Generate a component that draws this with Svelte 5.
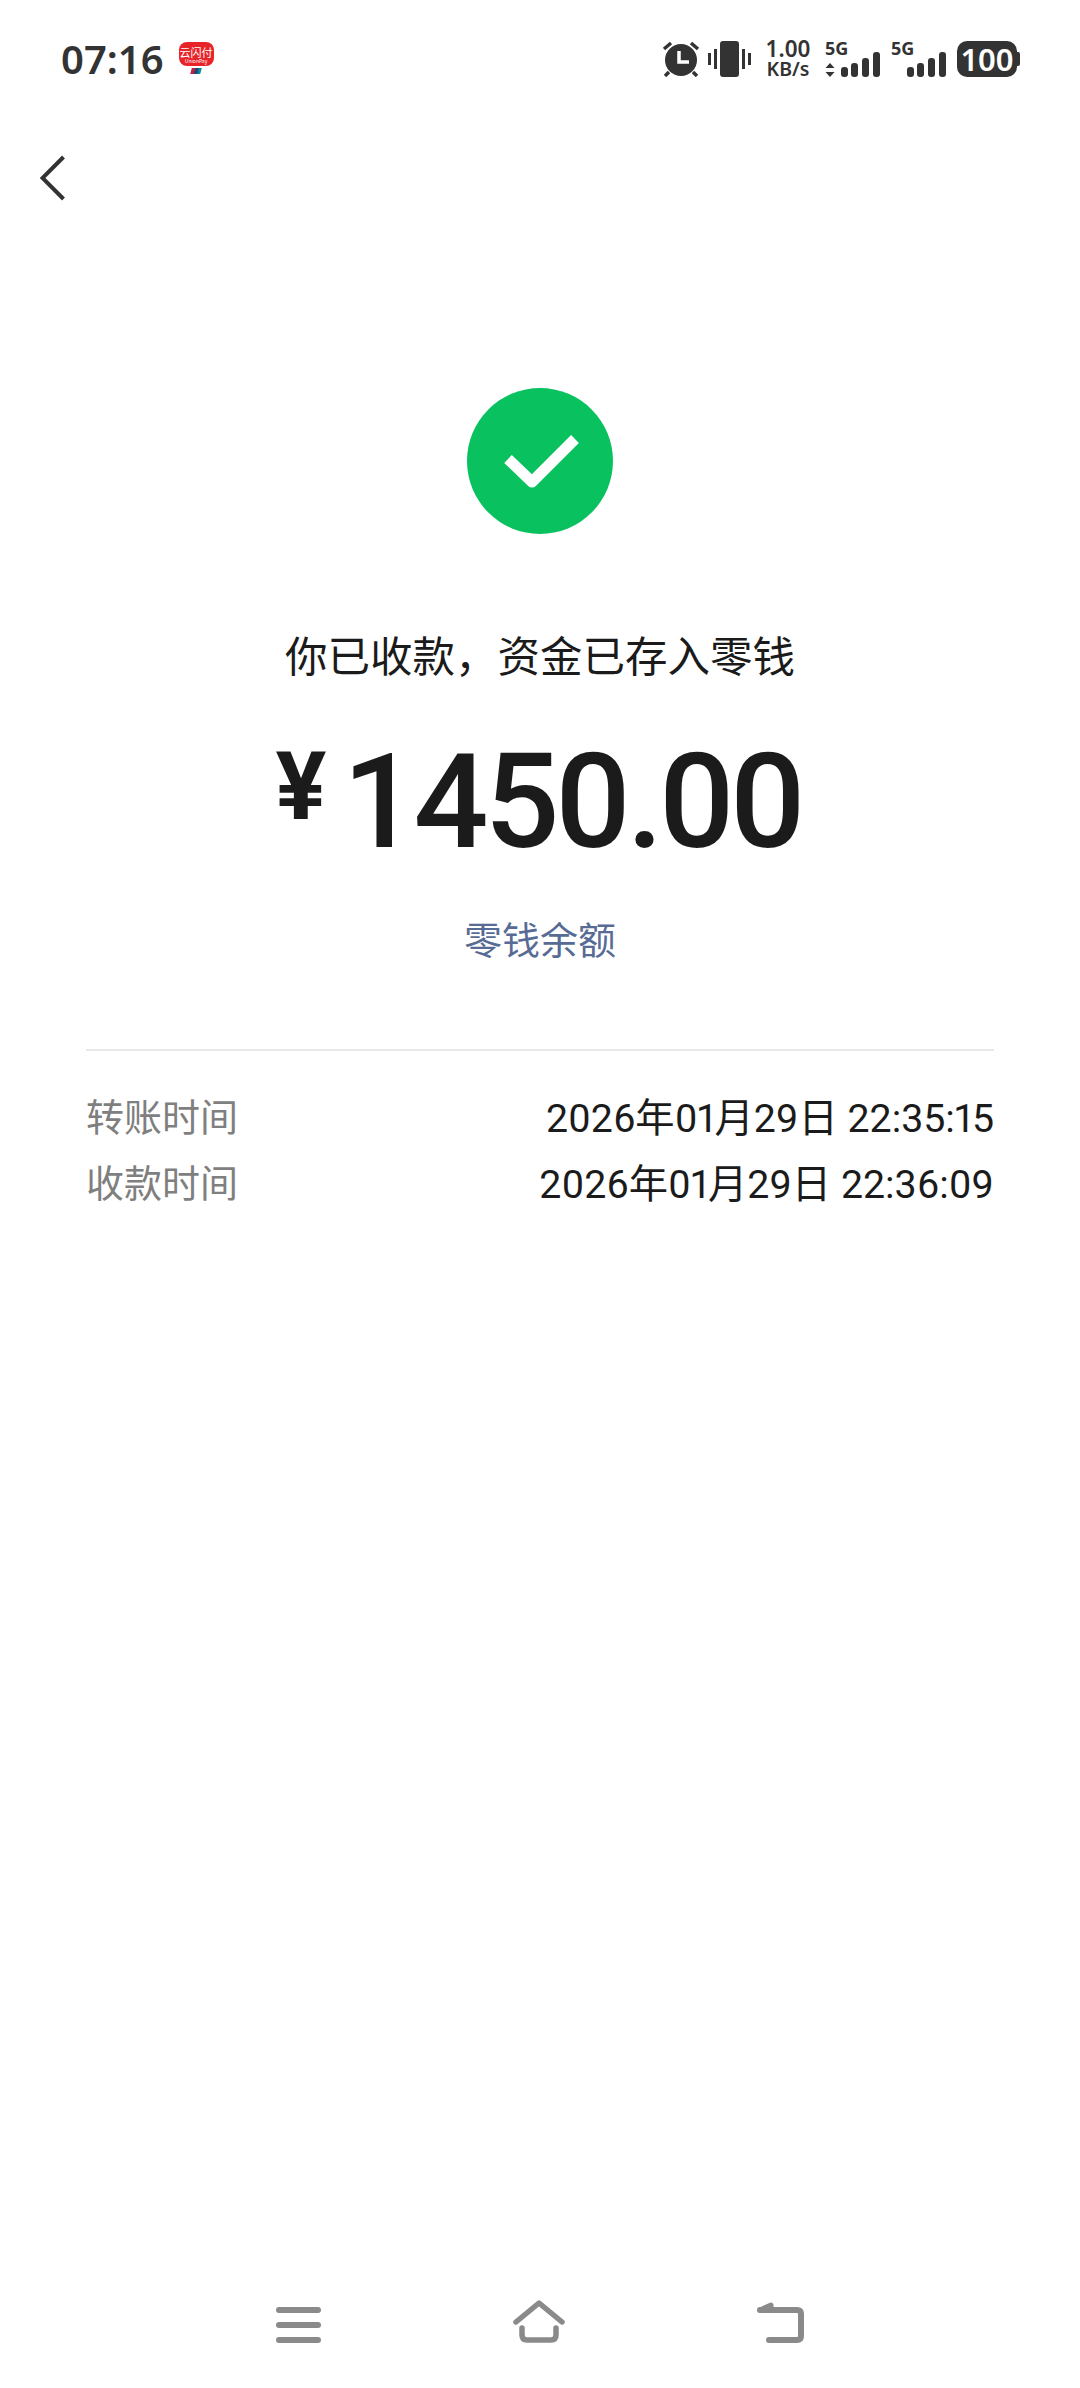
<script>
  // Transfer received page, phone status bar and nav bar included.
  const rows = [
    { label: "转账时间", value: "2026年01月29日 22:35:15" },
    { label: "收款时间", value: "2026年01月29日 22:36:09" },
  ];
  const signals = [{ arrows: true }, { arrows: false }];
  const bars = [
    { x: 16, y: 26, h: 10 },
    { x: 26, y: 22, h: 14 },
    { x: 37, y: 17, h: 19 },
    { x: 48, y: 11, h: 25 },
  ];
</script>

<div class="page">
  <header class="status">
    <div class="left">
      <span class="time">07:16</span>
      <div class="appicon">
        <div class="appicon_red">
          <span class="yun">云闪付</span>
          <span class="pay">UnionPay</span>
        </div>
        <div class="appicon_white"><i></i></div>
      </div>
    </div>
    <div class="right">
      <svg class="alarm" width="38" height="36" viewBox="0 0 38 36">
        <circle cx="19" cy="19" r="16" fill="#333" />
        <path d="M17 10v11h10" fill="none" stroke="#fff" stroke-width="3.500" />
        <path d="M2 8l7-6M36 8l-7-6M7 31l-4 4M31 31l4 4" stroke="#333" stroke-width="3.500" />
      </svg>
      <svg class="vibrate" width="43" height="36" viewBox="0 0 43 36">
        <rect x="12" y="0" width="19" height="36" rx="3" fill="#333" />
        <rect x="0" y="12" width="3" height="12" fill="#333" />
        <rect x="6" y="8" width="3" height="20" fill="#333" />
        <rect x="34" y="8" width="3" height="20" fill="#333" />
        <rect x="40" y="12" width="3" height="12" fill="#333" />
      </svg>
      <div class="speed">
        <span class="speed_num">1.00</span>
        <span class="speed_unit">KB/s</span>
      </div>
      {#each signals as s}
        <div class="signal">
          <span class="g5">5G</span>
          <svg width="56" height="36" viewBox="0 0 56 36">
            {#if s.arrows}
              <path d="M5 22l4.500 5h-9zM5 36l4.500-5h-9z" fill="#333" />
            {/if}
            {#each bars as b}
              <rect x={b.x} y={b.y} width="7" height={b.h} rx="3" fill="#333" />
            {/each}
          </svg>
        </div>
      {/each}
      <div class="battery"><span>100</span><i></i></div>
    </div>
  </header>

  <nav class="topbar">
    <svg width="26" height="46" viewBox="0 0 26 46">
      <path d="M23.500 2L2.500 23l21 21" fill="none" stroke="#333" stroke-width="4" />
    </svg>
  </nav>

  <main class="content">
    <svg class="okicon" width="146" height="146" viewBox="0 0 146 146">
      <circle cx="73" cy="73" r="73" fill="#0ac160" />
      <path d="M41 71l24 23 43-43" fill="none" stroke="#fff" stroke-width="11" stroke-linejoin="round" />
    </svg>
    <h1 class="title">你已收款&#65292;资金已存入零钱</h1>
    <div class="amount">
      <span class="yen">¥</span>
      <span class="num">1450.00</span>
    </div>
    <div class="balance">零钱余额</div>
    <div class="details">
      {#each rows as row}
        <div class="row">
          <span class="label">{row.label}</span>
          <span class="value">{row.value}</span>
        </div>
      {/each}
    </div>
  </main>

  <footer class="navbar">
    <svg width="45" height="50" viewBox="0 0 45 50">
      <path d="M3 12h39M3 27h39M3 42h39" fill="none" stroke="#8a8a8a" stroke-width="6" stroke-linecap="round" />
    </svg>
    <svg width="52" height="50" viewBox="0 0 52 50">
      <path d="M3 24L26 5l23 19" fill="none" stroke="#8a8a8a" stroke-width="5.500" stroke-linecap="round" stroke-linejoin="round" />
      <path d="M9 30v7q0 5 5 5h24q5 0 5-5v-7" fill="none" stroke="#8a8a8a" stroke-width="5.500" stroke-linecap="round" />
    </svg>
    <svg width="47" height="50" viewBox="0 0 47 50">
      <path d="M12 42h28q4 0 4-4V16q0-4-4-4H3" fill="none" stroke="#8a8a8a" stroke-width="6" stroke-linecap="round" stroke-linejoin="round" />
      <path d="M3 12L14 7v5z" fill="#8a8a8a" stroke="#8a8a8a" stroke-width="5" stroke-linejoin="round" />
    </svg>
  </footer>
</div>

<style>
  :global(body) {
    margin: 0;
    background: #fff;
  }
  .page {
    display: flex;
    flex-direction: column;
    width: 1080px;
    height: 2388px;
    overflow: hidden;
    background: #fff;
    font-family: Roboto, "Noto Sans CJK SC", sans-serif;
    color: #1b1b1b;
  }

  .status {
    display: flex;
    justify-content: space-between;
    align-items: center;
    height: 36px;
    padding: 41px 63px 0 61px;
  }
  .left,
  .right {
    display: flex;
    align-items: center;
  }
  .time {
    font-family: "Noto Sans", sans-serif;
    font-size: 40px;
    font-weight: 600;
    line-height: 36px;
    color: #333;
  }
  .appicon {
    display: flex;
    flex-direction: column;
    width: 35px;
    height: 35px;
    margin-left: 15px;
    border-radius: 8px;
    overflow: hidden;
    background: #fff;
  }
  .appicon_red {
    display: flex;
    flex-direction: column;
    align-items: center;
    height: 24px;
    background: #e8242a;
    color: #fff;
    border-radius: 0 0 8px 8px;
    font-family: "Noto Sans CJK SC", sans-serif;
  }
  .yun {
    font-size: 11px;
    line-height: 12px;
    margin-top: 4px;
  }
  .pay {
    font-size: 5px;
    line-height: 6px;
  }
  .appicon_white {
    display: flex;
    justify-content: center;
    align-items: center;
    flex: 1;
  }
  .appicon_white i {
    display: block;
    width: 10px;
    height: 6px;
    transform: skewX(-15deg);
    background: linear-gradient(90deg, #c8203c 0 35%, #1c4a7c 35% 70%, #0e8a94 70%);
  }
  .alarm {
    margin-right: 8px;
  }
  .vibrate {
    margin-right: 15px;
  }
  .speed {
    display: flex;
    flex-direction: column;
    align-items: center;
    width: 44px;
    margin-right: 15px;
    font-family: "Noto Sans", sans-serif;
    font-weight: 600;
    color: #333;
  }
  .speed_num {
    font-size: 22.500px;
    line-height: 20px;
  }
  .speed_unit {
    font-size: 19.500px;
    line-height: 20px;
  }
  .signal {
    display: grid;
    width: 56px;
    height: 36px;
    margin-right: 10px;
  }
  .signal > * {
    grid-area: 1 / 1;
  }
  .g5 {
    font-family: "Noto Sans", sans-serif;
    font-size: 18px;
    font-weight: 700;
    line-height: 14px;
    color: #333;
  }
  .battery {
    display: flex;
    align-items: center;
  }
  .battery span {
    display: block;
    width: 60px;
    height: 36px;
    border-radius: 10px;
    background: #333;
    color: #fff;
    text-align: center;
    font-family: "Noto Sans", sans-serif;
    font-size: 31px;
    font-weight: 600;
    line-height: 36px;
  }
  .battery i {
    display: block;
    width: 3px;
    height: 14px;
    background: #333;
    border-radius: 0 2px 2px 0;
    margin-right: -3px;
  }

  .topbar {
    display: flex;
    padding: 78px 0 0 40px;
    height: 46px;
  }

  .content {
    display: flex;
    flex-direction: column;
    align-items: center;
    flex: 1;
    padding: 187px 86px 0;
  }
  .okicon {
    display: block;
  }
  .title {
    margin: 94px 0 0;
    font-size: 42.500px;
    font-weight: 400;
    line-height: 60px;
    color: #1b1b1b;
  }
  .amount {
    display: flex;
    align-items: flex-start;
    margin-top: 49px;
    height: 130px;
  }
  .yen {
    font-size: 95px;
    font-weight: 700;
    line-height: 100px;
    margin-right: 16px;
  }
  .num {
    font-size: 132px;
    font-weight: 500;
    line-height: 130px;
    letter-spacing: -4px;
    margin-right: 3px;
  }
  .balance {
    margin-top: 48px;
    font-size: 38px;
    line-height: 52px;
    color: #576b95;
  }
  .details {
    width: 100%;
    margin-top: 82px;
    padding-top: 30px;
    border-top: 2px solid #e8e8e8;
  }
  .row {
    display: flex;
    justify-content: space-between;
    align-items: center;
    height: 66.500px;
    font-size: 38px;
  }
  .label {
    color: #7f7f7f;
  }
  .value {
    font-size: 39.300px;
    font-variant-numeric: proportional-nums;
    color: #1b1b1b;
  }

  .navbar {
    display: flex;
    justify-content: center;
    gap: 192px;
    height: 50px;
    padding-bottom: 40px;
  }
</style>
